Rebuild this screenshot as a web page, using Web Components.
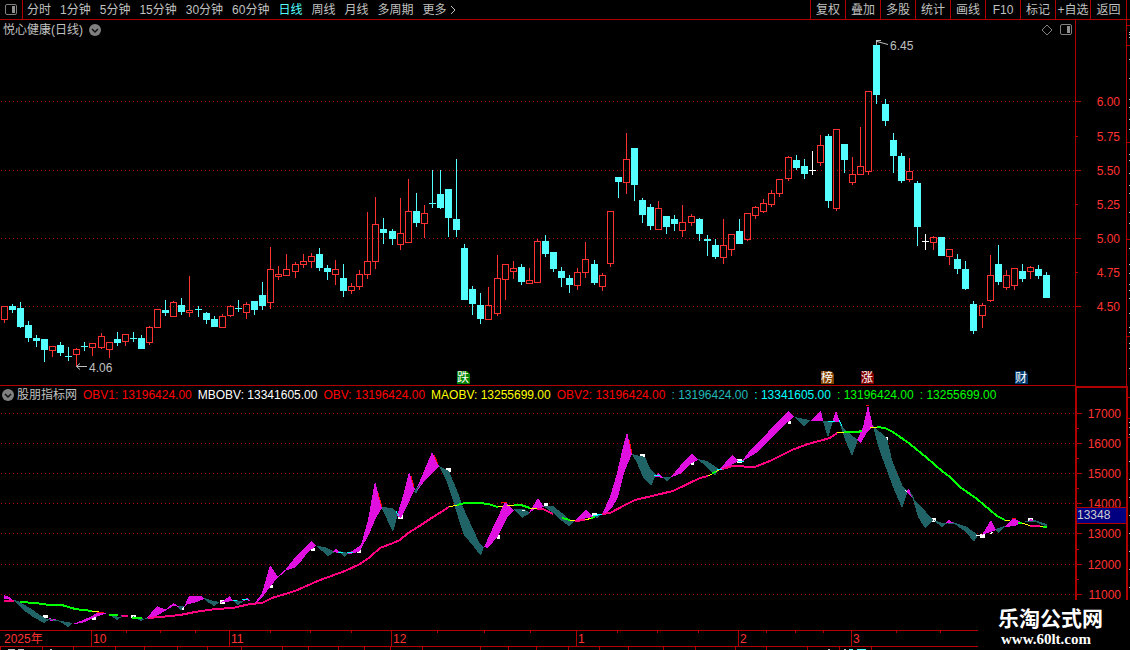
<!DOCTYPE html>
<html lang="zh-CN">
<head>
<meta charset="utf-8">
<title>悦心健康 日线</title>
<style>
    body {
        margin: 0;
        background: #000;
        color: #C0C0C0;
        font: 12px/14px "Liberation Sans", "Noto Sans CJK SC", sans-serif;
        --line: #B00000;
        --up: #FF3232;
        --down: #54FFFF;
    }
</style>
</head>
<body>
<stock-app></stock-app>

<script>
const svg = (h, top, body, label) => `
    <svg width="100%" height="${h}" role="img" aria-label="${label}">
        <g transform="translate(0,${-top})">${body}</g>
    </svg>`;

const SPLIT_ICON = `
    <svg width="12" height="12" aria-hidden="true">
        <rect x=".5" y=".5" width="11" height="10" rx="1.500" fill="none" stroke="#808080"/>
        <rect x="7" y="2" width="3" height="7" fill="#909090"/>
    </svg>`;

const ROUND_ICON = `
    <svg width="12" height="12" aria-hidden="true">
        <circle cx="6" cy="6" r="6" fill="#808080"/>
        <path d="M3 5 L6 8 L9 5" fill="none" stroke="#101010" stroke-width="1.5"/>
    </svg>`;

const BUTTON_RESET = `
    button {
        margin: 0; padding: 0;
        border: 0; background: none;
        color: inherit; font: inherit;
        white-space: nowrap; cursor: pointer;
    }
    svg { display: block; }`;

/* ---- 上方工具栏 ---- */
class PeriodBar extends HTMLElement {
    constructor() {
        super();
        this.attachShadow({ mode: 'open' });
    }

    connectedCallback() {
        const periods = ['分时', '1分钟', '5分钟', '15分钟', '30分钟', '60分钟', '日线', '周线', '月线', '多周期'];
        const tools = ['复权', '叠加', '多股', '统计', '画线', 'F10', '标记', '+自选', '返回'];
        const active = this.getAttribute('active');

        this.shadowRoot.innerHTML = `
            <style>
                ${BUTTON_RESET}
                :host {
                    display: flex;
                    justify-content: space-between;
                    height: 19px;
                    border-bottom: 1px solid var(--line);
                }
                nav, .tools { display: flex; }
                nav { gap: 9px; }
                .split {
                    display: flex; align-items: center; justify-content: center;
                    width: 23px;
                    border-right: 1px solid var(--line);
                    margin-right: -5px;
                }
                .active { color: var(--down); }
                .more { display: flex; align-items: center; gap: 3px; }
                .tools button {
                    width: 35px;
                    border-left: 1px solid var(--line);
                }
                .tools button:last-child { width: 36px; }
                .tools { border-right: 1px solid var(--line); margin-right: 3px; }
            </style>
            <nav>
                <button class="split" aria-label="分栏">${SPLIT_ICON}</button>
                ${periods.map(p => `<button class="${p === active ? 'active' : ''}">${p}</button>`).join('')}
                <button class="more">更多<svg width="6" height="10" aria-hidden="true"><path d="M1 1 L5 5 L1 9" fill="none" stroke="#C0C0C0"/></svg></button>
            </nav>
            <div class="tools">${tools.map(t => `<button>${t}</button>`).join('')}</div>`;
    }
}
customElements.define('period-bar', PeriodBar);

/* ---- 标题行 ---- */
class ChartTitle extends HTMLElement {
    constructor() {
        super();
        this.attachShadow({ mode: 'open' });
        this.shadowRoot.innerHTML = `
            <style>
                ${BUTTON_RESET}
                :host {
                    display: flex;
                    align-items: center;
                    gap: 6px;
                    box-sizing: border-box;
                    height: 18px;
                    padding: 1px 3px 0 3px;
                }
                .right { display: flex; gap: 7px; margin-left: auto; }
            </style>
            <slot></slot>
            <button aria-label="展开">${ROUND_ICON}</button>
            <div class="right">
                <button aria-label="标注"><svg width="12" height="12"><path d="M6 1 L11 6 L6 11 L1 6 Z" fill="none" stroke="#808080"/></svg></button>
                <button aria-label="分栏">${SPLIT_ICON}</button>
            </div>`;
    }
}
customElements.define('chart-title', ChartTitle);

/* ---- K线图 ----
   每根: [类型, 最高, 实体上沿, 实体下沿, 最低]  u 阳线  d 阴线  w 平盘 */
const CANDLES = `
u306,306,320,323 d304,306,310,313 d302,308,327,328 d321,325,338,342 d335,338,341,347 d339,339,350,362
u346,346,351,357 d342,345,353,356 d347,356,357,361 u348,349,355,366 d342,346,347,351 u343,343,348,356
u333,336,348,349 u342,342,350,358 d332,339,343,346 u334,334,342,346 d332,338,339,342 d335,338,349,349
u326,327,343,345 u309,309,328,328 d300,310,313,316 u301,302,317,317 d298,305,312,315 u276,310,313,317
d306,309,310,317 d312,313,320,324 d316,319,327,327 u314,316,328,328 u305,306,316,317 d300,308,309,312
u302,304,313,319 d301,301,310,315 d282,295,306,310 u247,269,303,309 u266,274,277,280 u254,269,276,276
u262,264,272,278 u254,261,265,268 u253,256,262,268 d248,254,268,271 d265,268,272,280 u260,269,275,285
d264,278,291,297 u283,286,291,294 u270,274,287,290 u212,261,275,279 u197,224,262,269 d218,229,233,244
d229,231,239,245 u198,233,245,250 u179,211,243,243 d193,211,223,227 u205,213,224,238 d170,203,204,208
d170,194,208,209 d189,189,218,237 d159,219,230,237 d244,248,300,300 d286,289,304,315 d293,305,319,324
u287,305,320,320 u255,278,314,316 u264,264,280,300 u261,268,272,279 d264,267,282,285 u268,280,284,284
u239,241,283,283 d235,241,254,257 d252,252,269,272 d267,271,278,287 d275,278,285,293 u268,272,286,290
u242,259,273,278 d260,264,283,285 u273,275,287,291 u211,211,264,267 d177,177,182,198 u133,159,183,194
d148,148,185,201 d198,200,215,223 d204,207,226,230 u201,208,230,230 d216,216,227,234 d215,219,224,231
u205,222,231,237 u214,216,223,226 d218,219,234,241 d235,239,241,256 d239,245,257,259 u219,245,258,264
u234,234,250,256 d219,231,244,244 u213,213,240,241 u206,207,216,219 u199,203,212,213 u190,193,205,207
u179,179,194,197 u156,157,179,181 d155,160,168,170 d159,166,174,179 w151,170,171,175 u135,145,163,166
d134,136,201,208 u129,129,209,211 d144,144,160,173 u157,174,183,185 u127,166,175,175 u91,91,172,175
d40,45,95,104 d99,104,121,126 d133,140,156,173 d153,156,181,183 u158,171,180,182 d181,183,227,246
w234,241,242,250 u236,237,243,250 d237,237,256,256 u249,249,257,265 d254,259,269,274 d261,269,289,290
d301,304,331,334 u303,305,316,328 u255,275,301,302 d245,264,282,285 u270,275,288,290 u268,268,286,290
d264,271,279,282 u266,267,272,279 d265,269,276,279 d272,275,298,298`
    .trim().split(/\s+/).map(s => [s[0], ...s.slice(1).split(',').map(Number)]);

const grid = ys => ys.map(y =>
    `<line x1="1" x2="100%" y1="${y}.5" y2="${y}.5" stroke="#B00000" stroke-dasharray="1 3" shape-rendering="crispEdges"/>`).join('');

class CandleChart extends HTMLElement {
    constructor() {
        super();
        this.attachShadow({ mode: 'open' });
    }

    connectedCallback() {
        const color = { u: '#FF3232', d: '#54FFFF', w: '#FFFFFF' };

        const bars = CANDLES.map(([type, high, top, bottom, low], i) => {
            const x = 4 + i * 8 + Math.floor((i + 0.5) / 12.12);
            const c = color[type];
            if (type !== 'u') {
                return `<path d="M${x - 3} ${top}h7v${bottom - top}h-7z M${x} ${high}h1v${low - high}h-1z" fill="${c}"/>`;
            }
            return `<rect x="${x - 2.5}" y="${top + 0.5}" width="6" height="${bottom - top - 1}" fill="none" stroke="${c}"/>
                <path d="M${x} ${high}h1v${top - high}h-1z M${x} ${bottom}h1v${low - bottom}h-1z" fill="${c}"/>`;
        }).join('');

        const badges = [
            [457, '跌', '#008000'],
            [821, '榜', '#804000'],
            [861, '涨', '#800000'],
            [1015, '财', '#003870'],
        ].map(([x, t, c]) => `
            <path d="M${x} 371h10l3 3v10h-13z" fill="${c}"/>
            <text x="${x}" y="382">${t}</text>`).join('');

        this.shadowRoot.innerHTML = `
            <style>
                :host { display: block; border-bottom: 1px solid var(--line); }
                svg { display: block; }
                text { font-size: 12px; fill: #C0C0C0; }
                .badges text { fill: #FFF; }
            </style>
            ${svg(347, 38, `
                ${grid([101, 170, 238, 306])}
                <g shape-rendering="crispEdges">${bars}</g>
                <g fill="none" stroke="#C0C0C0">
                    <path d="M87 366.5H76.500M80 363.500L76.500 366.500L80 369.500"/>
                    <path d="M888 44.500L877 41.500M876.500 45V40.500H881"/>
                </g>
                <text x="89" y="372">4.06</text>
                <text x="890" y="50">6.45</text>
                <g class="badges">${badges}</g>`, 'K线图')}`;
    }
}
customElements.define('candle-chart', CandleChart);

/* ---- 指标图例 ---- */
class IndicatorLegend extends HTMLElement {
    constructor() {
        super();
        this.attachShadow({ mode: 'open' });
    }

    connectedCallback() {
        const items = [
            ['OBV1: 13196424.00', '#FF0000'],
            ['MBOBV: 13341605.00', '#FFFFFF'],
            ['OBV: 13196424.00', '#FF0000'],
            ['MAOBV: 13255699.00', '#FFFF00'],
            ['OBV2: 13196424.00', '#FF0000'],
            [': 13196424.00', '#20B8B8'],
            [': 13341605.00', '#00FFFF'],
            [': 13196424.00', '#00FF00'],
            [': 13255699.00', '#00FF00'],
        ];
        this.shadowRoot.innerHTML = `
            <style>
                ${BUTTON_RESET}
                :host {
                    display: flex;
                    align-items: center;
                    gap: 6px;
                    height: 17px;
                    padding-left: 2px;
                    white-space: nowrap;
                    overflow: hidden;
                }
                .name { margin-left: -3px; }
            </style>
            <button aria-label="展开">${ROUND_ICON}</button>
            <span class="name">${this.getAttribute('name')}</span>
            ${items.map(([t, c]) => `<span style="color:${c}">${t}</span>`).join('')}`;
    }
}
customElements.define('indicator-legend', IndicatorLegend);

/* ---- OBV 指标图 ---- */
const TEAL = [
    '12,599 20,602 30,608 40,615 49,620 44,623 33,617 22,609',
    '57,620 66,622 73,623 68,627 62,623',
    '107,613 118,617 123,616 117,620', '132,616 145,619 141,621',
    '176,606 181,611 184,606', '204,598 213,601 220,602 214,606 206,601',
    '232,600 244,601 238,605', '316,546 325,547 335,552 328,556 322,551',
    '338,551 349,553 344,557', '381,507 393,508 398,514 393,532',
    '414,492 420,486 416,494',
    '439,466 449,471 458,493 463,507 472,527 480,544 484,547 481,556 474,547 464,535 458,517 452,497 446,480',
    '513,509 524,509 530,513 522,518', '543,506 553,506 562,513 570,520 575,521 569,526 562,521 553,513',
    '592,516 598,515 602,514 597,518',
    '632,454 645,457 650,468 656,475 651,486 643,477 637,463',
    '663,477 667,482 671,477', '697,459 707,461 719,469 715,476 708,469 702,463',
    '794,417 810,420 804,427', '823,421 833,421 828,438',
    '839,421 845,430 858,440 852,456 845,440',
    '873,426 887,438 892,460 903,487 908,491 902,508 893,487 883,460 877,442',
    '912,496 917,503 926,512 933,520 925,528 918,517',
    '933,520 942,523 949,522 942,527', '952,522 967,527 978,535 974,542 967,533',
    '995,529 1005,526 998,533', '1021,522 1028,521 1034,520 1047,524 1047,527 1036,522',
];

const MAGENTA = [
    '4,595 9,597 13,600 4,599', '49,618 58,620 50,621',
    '73,624 78,622 90,617 99,612 107,613 95,617 85,622 76,624',
    '120,615 131,617 122,617',
    '145,619 151,613 157,606 166,610 173,603 180,607 173,606 160,614 152,618',
    '184,607 189,596 201,596 204,599 194,603 187,604',
    '220,603 230,596 233,601 224,602', '242,601 247,598 252,602 247,600',
    '255,603 262,593 270,565 278,577 270,587 264,595 258,602',
    '286,569 293,560 302,550 311,541 316,546 308,552 302,560 296,567 288,570',
    '332,552 336,549 340,553',
    '349,553 361,545 368,520 375,481 382,508 376,518 370,532 360,551 355,553',
    '397,516 404,492 409,472 415,489 405,510 401,518',
    '416,490 432,452 439,466 432,474 425,480 418,490',
    '484,547 495,523 505,502 514,510 507,518 498,536 488,548',
    '529,513 538,498 544,507 535,509', '575,521 586,509 593,517 582,519',
    '602,514 610,497 617,473 623,447 627,432 632,454 628,463 624,473 618,497 612,508 605,514',
    '655,477 658,473 664,478', '671,477 684,461 692,454 698,460 690,464 682,473 675,476',
    '719,470 732,455 738,461 727,468', '742,461 748,453 788,411 794,417 788,422 756,453 743,461',
    '811,421 821,410 823,421', '832,422 836,411 840,422',
    '857,440 863,427 868,405 873,427 867,432 861,443',
    '906,492 909,488 912,497', '945,523 949,520 954,523',
    '982,535 991,520 996,530', '1004,527 1014,518 1022,523 1015,526',
    '1028,521 1031,519 1034,521',
];

const MA_LINES = {
    '#FF0080': [
        '4,601 14,601', '122,616 128,616',
        '148,618 160,617 180,615 195,612 215,609 233,608 250,604 262,603 272,598 295,591 320,580 345,571 360,564 370,557 380,548 393,543 400,540 408,533 418,527 430,519 449,507',
        '537,509 543,509 553,514', '575,521 585,520',
        '602,514 610,513 625,505 635,500 673,491 700,478 708,476', '722,469 733,466 755,467 772,460 792,450 808,444 830,438 837,433',
        '1030,526 1040,526',
    ],
    '#00FF00': [
        '20,602 35,603 50,605 62,605 75,609 92,611', '109,615 118,615', '132,618 142,618',
        '457,505 465,503 480,503 488,504 498,507', '514,505 521,505 530,508', '562,518 570,520', '591,518 595,517',
        '712,473 716,472',
        '844,432 857,432 862,431', '877,427 885,428 893,432 910,444 927,458 942,471 950,477 960,487 977,499 997,516 1005,520',
        '1018,523 1022,523', '1043,527 1047,527',
    ],
};

const THIN_LINES = {
    '#E010E0': ['163,612 173,604', '277,578 288,568', '348,554 356,552'],
    '#206468': ['145,619 150,618', '48,619 58,621', '910,492 914,499', '948,523 954,523', '414,492 421,484'],
    '#FFFF00': ['92,611 99,612', '449,507 457,505', '498,507 503,506', '507,506 514,505', '530,508 537,509', '570,520 575,521', '585,520 592,518', '708,476 721,469', '837,433 844,432', '870,427 877,427', '1005,520 1010,521', '1022,523 1031,526', '1040,526 1045,526'],
    '#00FFFF': ['233,600 237,601', '242,599 248,599', '338,552 343,553', '347,553 353,552', '396,511 399,516', '593,516 602,514', '654,476 660,475', '717,469 722,469', '738,461 744,461', '828,422 835,421', '839,420 842,426'],
    '#FF0000': ['97,612 104,612', '378,493 382,507', '411,476 414,487', '434,455 438,464', '501,502 507,502', '629,440 632,453', '866,405 869,405', '1012,518 1016,518'],
    '#FFFFFF': ['136,617 142,618', '522,510 525,511', '544,504 548,504', '905,490 907,492', '976,535 984,536', '990,534 993,532'],
};

const MARKS = [
    [43, 615, 5, 3], [92, 617, 4, 3], [131, 615, 5, 3], [180, 606, 4, 4], [220, 600, 5, 4], [270, 585, 3, 3],
    [311, 548, 4, 3], [357, 550, 4, 3], [398, 515, 5, 4], [446, 468, 5, 4], [497, 535, 3, 4],
    [544, 503, 4, 3], [592, 513, 5, 3], [640, 454, 5, 4], [691, 462, 3, 3], [737, 459, 5, 4],
    [788, 421, 3, 3], [885, 437, 3, 4], [932, 518, 4, 4], [980, 534, 5, 4], [1028, 518, 5, 4],
];

class ObvChart extends HTMLElement {
    constructor() {
        super();
        this.attachShadow({ mode: 'open' });
    }

    connectedCallback() {
        const polys = (list, c) => list.map(p => `<polygon points="${p}" fill="${c}"/>`).join('');
        const lines = (set, w) => Object.entries(set).map(([c, list]) =>
            list.map(p => `<polyline points="${p}" fill="none" stroke="${c}" stroke-width="${w}"/>`).join('')).join('');

        this.shadowRoot.innerHTML = `
            <style>
                :host { display: block; }
                svg { display: block; }
            </style>
            ${svg(227, 403, `
                ${grid([413, 443, 473, 503, 533, 564, 594])}
                <g shape-rendering="crispEdges">
                    ${MARKS.map(([x, y, w, h]) => `<rect x="${x}" y="${y}" width="${w}" height="${h}" fill="#fff"/>`).join('')}
                    ${polys(TEAL, '#206468')}
                    ${polys(MAGENTA, '#E010E0')}
                    ${lines(THIN_LINES, 1)}
                    ${lines(MA_LINES, 2)}
                </g>`, 'OBV 指标')}`;
    }
}
customElements.define('obv-chart', ObvChart);

/* ---- 右侧刻度 ---- */
class ValueAxis extends HTMLElement {
    constructor() {
        super();
        this.attachShadow({ mode: 'open' });
    }

    connectedCallback() {
        const top = Number(this.getAttribute('top'));
        const height = Number(this.getAttribute('height'));
        const ticks = this.getAttribute('ticks').split(' ').map(t => t.split('@'));
        const minor = (this.getAttribute('minor') || '').split(' ').filter(Boolean);

        this.shadowRoot.innerHTML = `
            <style>
                :host { display: block; position: relative; }
                svg { display: block; }
                text { font-size: 12px; fill: var(--up); text-anchor: end; }
                path { stroke: var(--line); }
            </style>
            ${svg(height, top, `
                ${ticks.map(([label, y, short]) => `
                    <path d="M0 ${y}.5h${short ? 2 : 5}"/>
                    <text x="44" y="${Number(y) + 5}">${label}</text>`).join('')}
                ${minor.map(y => `<path d="M0 ${y}.5h2"/>`).join('')}`, '刻度')}
            <slot></slot>`;
    }
}
customElements.define('value-axis', ValueAxis);

/* 当前值标签, 浮在刻度上 */
class CursorValue extends HTMLElement {
    constructor() {
        super();
        this.attachShadow({ mode: 'open' });
        this.shadowRoot.innerHTML = `
            <style>
                :host {
                    position: absolute;
                    left: 0; right: 0; top: 119px;
                    height: 15px;
                    background: #000080;
                    border: 1px solid var(--line);
                    border-width: 1px 0;
                    color: #D0D0D0;
                }
            </style>
            <slot></slot>`;
    }
}
customElements.define('cursor-value', CursorValue);

/* ---- 日期轴 ---- */
class DateAxis extends HTMLElement {
    constructor() {
        super();
        this.attachShadow({ mode: 'open' });
    }

    connectedCallback() {
        const months = [[91, '10'], [229, '11'], [391, '12'], [576, '1'], [738, '2'], [851, '3']];
        const weeks = [126, 160, 195, 270, 310, 351, 437, 484, 530, 617, 657, 698, 766, 795, 823, 896, 940];
        const below = [0, 42, 73, 115, 144, 177, 207, 241, 282, 308, 338, 364, 390, 422, 480, 508, 536, 568, 599, 628, 663, 695, 735, 766, 807, 839, 871];

        this.shadowRoot.innerHTML = `
            <style>
                :host { display: block; }
                svg { display: block; }
                text { font-size: 12px; fill: var(--up); }
                path { stroke: var(--line); fill: none; }
            </style>
            ${svg(20, 630, `
                <line x2="100%" y1="630.5" y2="630.5" stroke="#B00000"/>
                <line x2="100%" y1="646.5" y2="646.5" stroke="#B00000"/>
                <text x="4" y="643">2025年</text>
                ${months.map(([x, t]) => `<path d="M${x}.5 631v15"/><text x="${x + 2}" y="643">${t}</text>`).join('')}
                ${weeks.map(x => `<path d="M${x}.5 631v2"/>`).join('')}
                ${below.map(x => `<path d="M${x}.5 647v3"/>`).join('')}
                <path d="M8 649.5h7m3 0h6M50 649.5h2M828 649.5h2M844 649.5h2" style="stroke:#C0C0C0"/>
                <path d="M849 649.5h4M857 649.5h9" style="stroke:#54FFFF"/>`, '日期')}`;
    }
}
customElements.define('date-axis', DateAxis);

/* ---- 右边缘细栏 ---- */
class SideRail extends HTMLElement {
    constructor() {
        super();
        this.attachShadow({ mode: 'open' });
        const lines = [25, 45, 142, 239, 336, 397, 418, 437];
        const specks = [32, 34, 37, 59, 78, 99, 107, 119, 129, 154, 160, 173, 185, 193, 212, 223, 248, 264, 273, 284, 290, 298, 313, 327, 332, 343, 348, 368, 422, 427, 434, 461, 479, 497, 515, 533, 551, 569, 587];
        this.shadowRoot.innerHTML = `
            <style>
                :host { display: block; }
                svg { display: block; }
            </style>
            ${svg(580, 20, `
                ${lines.map(y => `<path d="M0 ${y}.5h4" stroke="#B00000"/>`).join('')}
                ${specks.map(y => `<rect x="2" y="${y}" width="1" height="1" fill="#C0C0C0"/>`).join('')}`, '边栏')}`;
    }
}
customElements.define('side-rail', SideRail);

class SiteMark extends HTMLElement {
    constructor() {
        super();
        this.attachShadow({ mode: 'open' });
        this.shadowRoot.innerHTML = `
            <style>
                :host {
                    position: absolute;
                    right: 0; bottom: 0;
                    box-sizing: border-box;
                    width: 152px; height: 50px;
                    padding: 7px 0 0 20px;
                    background: #000;
                    color: #FFF;
                }
                strong { display: block; font-size: 21px; line-height: 24px; }
                a {
                    display: block;
                    margin-left: 3px;
                    color: inherit; text-decoration: none;
                    font: bold 15px/16px "Liberation Serif", serif;
                }
            </style>
            <strong>乐淘公式网</strong>
            <a href="#">www.60lt.com</a>`;
    }
}
customElements.define('site-mark', SiteMark);

class StockApp extends HTMLElement {
    constructor() {
        super();
        this.attachShadow({ mode: 'open' });
        this.shadowRoot.innerHTML = `
            <style>
                :host { display: block; position: relative; overflow: hidden; }
                main {
                    display: grid;
                    grid-template-columns: minmax(0, 1fr) 51px 4px;
                }
                .price { border-left: 1px solid var(--line); border-right: 1px solid var(--line); margin-right: -1px; }
                .obv { border: 2px solid var(--line); border-bottom: 0; margin-right: -2px; }
                side-rail { grid-column: 3; grid-row: 1 / 3; margin-left: 1px; }
            </style>
            <period-bar active="日线"></period-bar>
            <main>
                <section>
                    <chart-title>悦心健康(日线)</chart-title>
                    <candle-chart></candle-chart>
                </section>
                <value-axis class="price" top="20" height="366"
                    ticks="6.00@101 5.75@136@s 5.50@170 5.25@204@s 5.00@238 4.75@272@s 4.50@306"></value-axis>
                <side-rail></side-rail>
                <section>
                    <indicator-legend name="股朋指标网"></indicator-legend>
                    <obv-chart></obv-chart>
                </section>
                <value-axis class="obv" top="388" height="242"
                    ticks="17000@413 16000@443 15000@473 14000@503 13000@533 12000@564 11000@594"
                    minor="428 458 488 549 579"><cursor-value>13348</cursor-value></value-axis>
            </main>
            <date-axis></date-axis>
            <site-mark></site-mark>`;
    }
}
customElements.define('stock-app', StockApp);
</script>
</body>
</html>
